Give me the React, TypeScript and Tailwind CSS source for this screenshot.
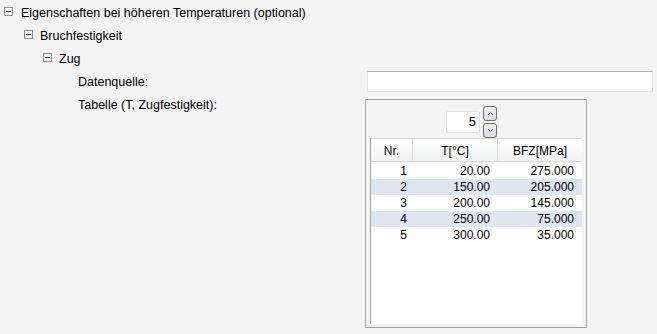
import React from "react";

const rows = [
  { nr: 1, t: "20.00", bfz: "275.000" },
  { nr: 2, t: "150.00", bfz: "205.000" },
  { nr: 3, t: "200.00", bfz: "145.000" },
  { nr: 4, t: "250.00", bfz: "75.000" },
  { nr: 5, t: "300.00", bfz: "35.000" },
];

const MinusBox = () => (
  <svg width="9" height="9" viewBox="0 0 9 9" className="mt-[5px] shrink-0">
    <rect x="0.5" y="0.5" width="8" height="8" fill="#fbfbfb" stroke="#8f8f8f" />
    <line x1="2" y1="4.5" x2="7" y2="4.5" stroke="#333" />
  </svg>
);

const Chevron = ({ up }: { up?: boolean }) => (
  <svg width="7" height="5" viewBox="0 0 7 5">
    <polyline
      points={up ? "1,4 3.5,1.5 6,4" : "1,1 3.5,3.5 6,1"}
      fill="none"
      stroke="#3d4f80"
      strokeWidth="1"
    />
  </svg>
);

const App = () => {
  return (
    <div className="w-[657px] h-[334px] overflow-hidden bg-[#f3f3f3] pt-[2px] text-[12.5px] text-black font-['Liberation_Sans',Arial,sans-serif]">
      {/* tree */}
      <div className="flex h-[23px] items-start pl-[4px]">
        <MinusBox />
        <span className="ml-[8px] leading-[23px]">Eigenschaften bei höheren Temperaturen (optional)</span>
      </div>
      <div className="flex h-[23px] items-start pl-[24px]">
        <MinusBox />
        <span className="ml-[7px] leading-[23px]">Bruchfestigkeit</span>
      </div>
      <div className="flex h-[23px] items-start pl-[43px]">
        <MinusBox />
        <span className="ml-[7px] leading-[23px]">Zug</span>
      </div>

      {/* form */}
      <div className="flex h-[23px] items-start">
        <span className="w-[365px] shrink-0 pl-[78px] leading-[23px]">Datenquelle:</span>
        <div className="ml-[2px] h-[21px] w-[286px] border border-[#e2e3ea] border-t-[#abadb3] border-b-[#e3e9ef] bg-white" />
      </div>
      <div className="flex items-start">
        <span className="w-[365px] shrink-0 pl-[78px] leading-[23px]">Tabelle (T, Zugfestigkeit):</span>
        <div className="mt-[5px] flex h-[229px] w-[222px] flex-col border border-[#a0a0a0] bg-[#f3f3f3] px-[4px] pt-[5px] pb-[3px] text-[12px]">
          {/* spinner */}
          <div className="flex h-[33px] shrink-0 items-center justify-center gap-[3px] pr-[9px]">
            <div className="flex h-[22px] w-[34px] items-center justify-end rounded-[2px] border border-[#e0e0e0] bg-white pr-[3px] text-[13px]">
              5
            </div>
            <div className="flex flex-col gap-[2px]">
              <div className="flex h-[15px] w-[14px] items-center justify-center rounded-[3px] border border-[#707070] bg-gradient-to-b from-[#f2f2f2] to-[#d8d8d8]">
                <Chevron up />
              </div>
              <div className="flex h-[15px] w-[14px] items-center justify-center rounded-[3px] border border-[#707070] bg-gradient-to-b from-[#f2f2f2] to-[#d8d8d8]">
                <Chevron />
              </div>
            </div>
          </div>
          {/* table */}
          <div className="flex-1 border-l border-[#a0a0a0] bg-white">
            <div className="grid h-[24px] grid-cols-[42px_85px_84px] border-t border-b border-[#d5d5d5] bg-gradient-to-b from-white to-[#f0f1f3]">
              <div className="flex items-center justify-center border-r border-[#dcdcdc] pt-[2px]">Nr.</div>
              <div className="flex items-center justify-center border-r border-[#dcdcdc] pt-[2px]">T[°C]</div>
              <div className="flex items-center justify-center pt-[2px]">BFZ[MPa]</div>
            </div>
            <div className="pt-[1px]">
              {rows.map((r, i) => (
                <div
                  key={r.nr}
                  className={`grid h-[16px] grid-cols-[42px_85px_84px] items-center leading-[16px] ${i % 2 === 1 ? "bg-[#dee6ef]" : "bg-white"}`}
                >
                  <div className="pr-[6px] text-right">{r.nr}</div>
                  <div className="pr-[8px] text-right">{r.t}</div>
                  <div className="pr-[8px] text-right">{r.bfz}</div>
                </div>
              ))}
            </div>
          </div>
        </div>
      </div>
    </div>
  );
};

export default App;
